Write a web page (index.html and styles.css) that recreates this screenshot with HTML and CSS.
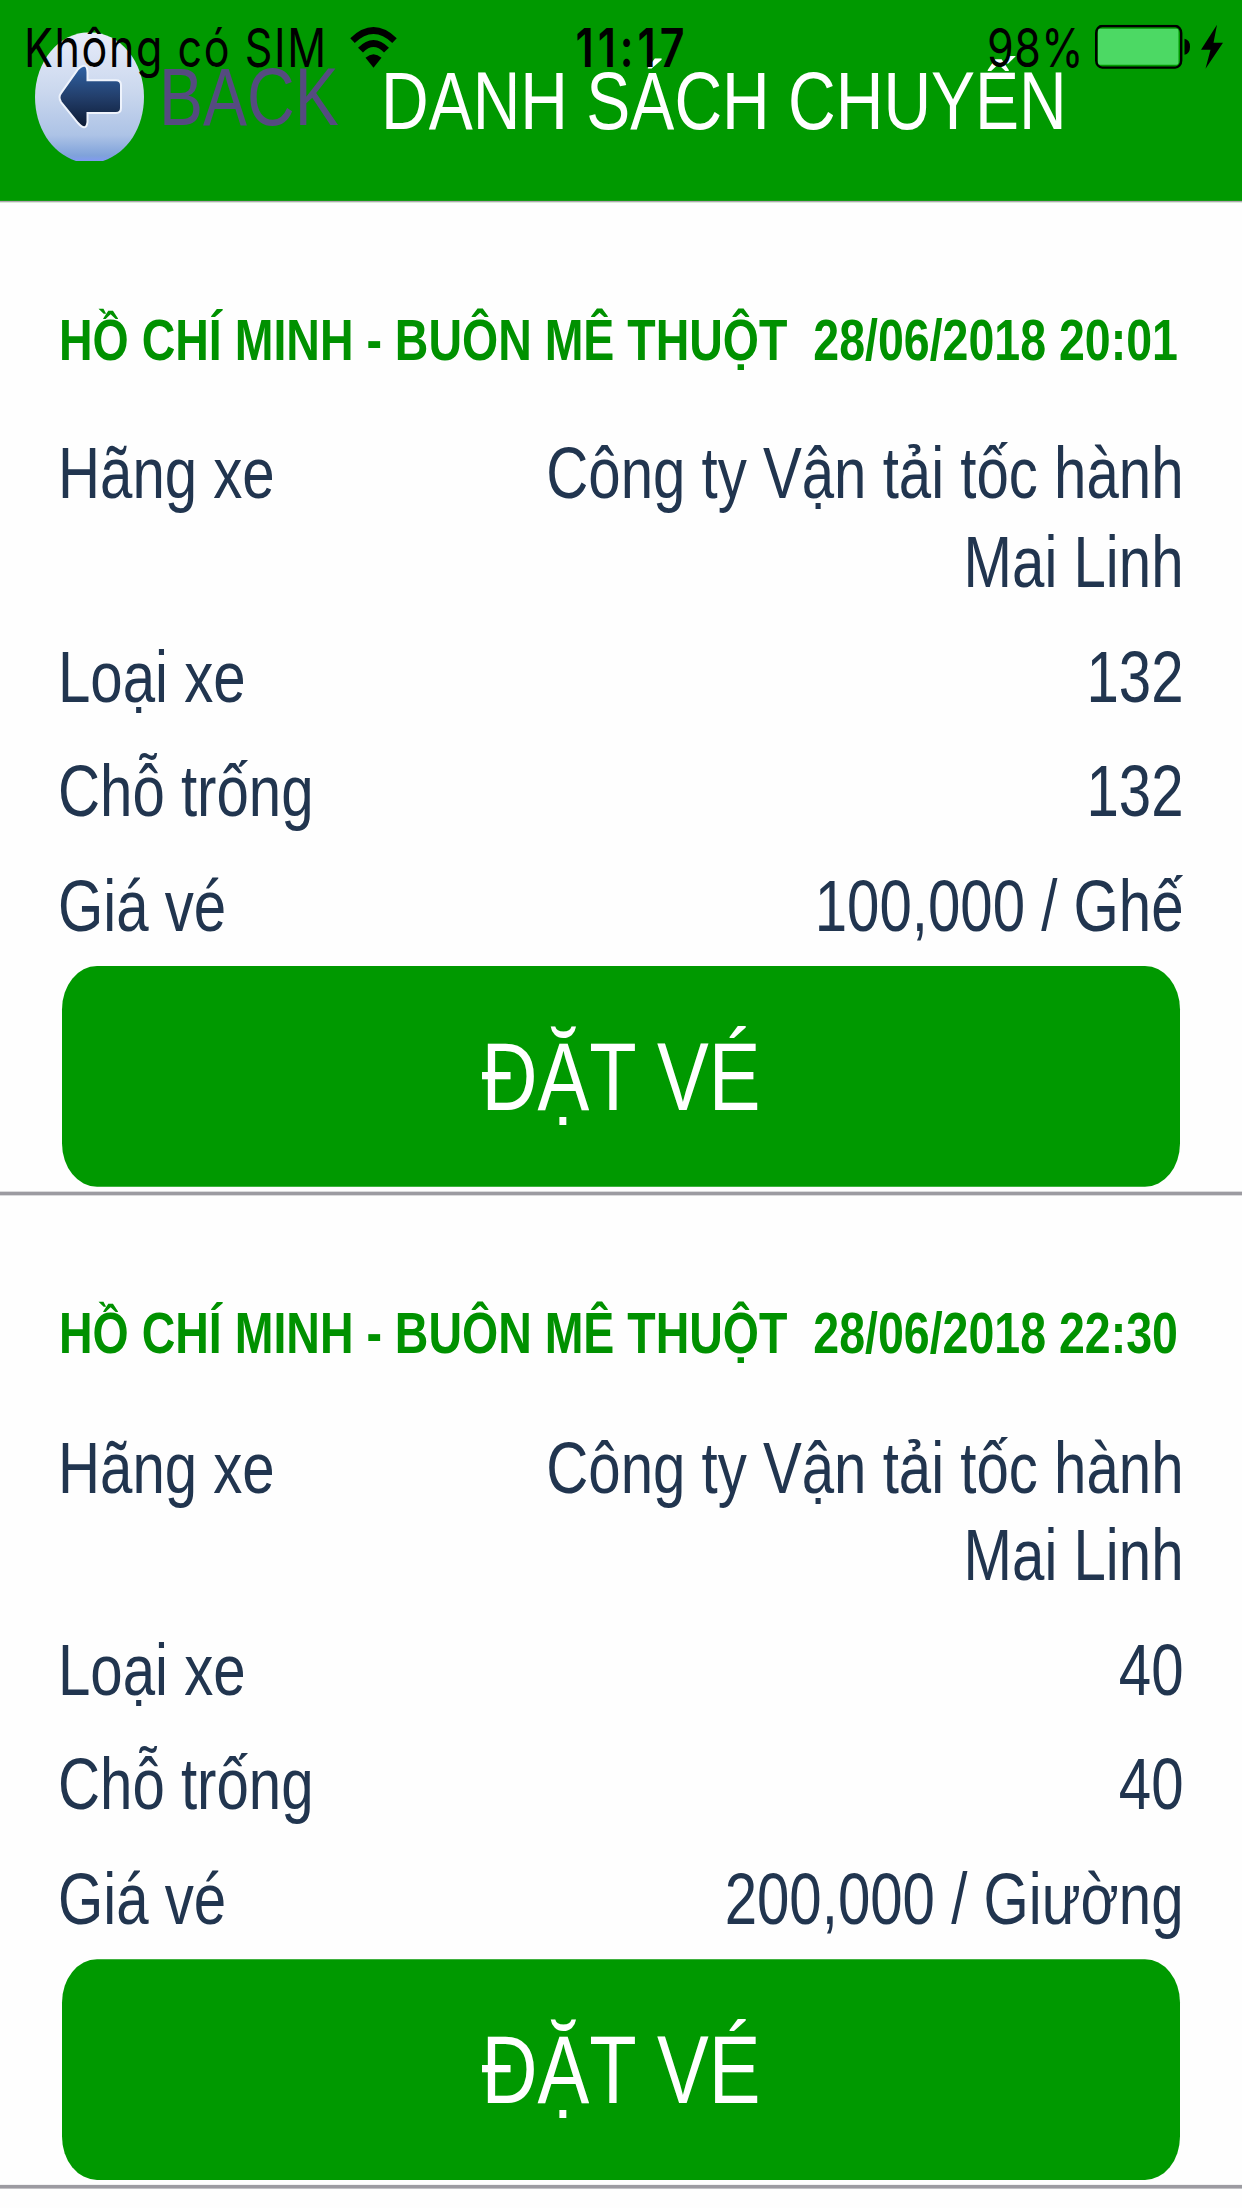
FILE: index.html
```html
<!DOCTYPE html>
<html lang="vi">
<head>
    <meta charset="UTF-8">
    <meta name="viewport" content="width=device-width, initial-scale=1.0">
    <title>Danh sách chuyến</title>
    <link rel="stylesheet" href="styles.css">
</head>
<body>
    <div class="screen">
        <div class="status-bar">
            <div class="status-left">
                <span class="carrier">Không có SIM</span>
                <svg class="wifi" viewBox="0 0 48 42" preserveAspectRatio="none">
                    <path d="M2.500 14.500 Q23.500 -5.500 44.500 14.500" fill="none" stroke="#000" stroke-width="6.500"/>
                    <path d="M10.500 24 Q23.500 11 36.500 24" fill="none" stroke="#000" stroke-width="7"/>
                    <path d="M15.500 31.500 Q23.500 24.500 31.500 31.500 L23.500 41.500 Z"/>
                </svg>
            </div>
            <span class="time">11:17</span>
            <div class="status-right">
                <span class="percent">98%</span>
                <svg class="battery" viewBox="0 0 95 44" preserveAspectRatio="none">
                    <rect x="1.200" y="1.200" width="85" height="41.600" rx="6" ry="7" fill="none" stroke="#000" stroke-width="2.400"/>
                    <rect x="3" y="4" width="80.500" height="36" rx="2" fill="#4cd964"/>
                    <path d="M89.500 14 Q95 15 95 22 Q95 29 89.500 30 Z"/>
                </svg>
                <svg class="bolt" viewBox="0 0 22 44" preserveAspectRatio="none">
                    <path d="M16 0 L0 25 H9.500 L4.500 44 L22 18 H12.500 Z"/>
                </svg>
            </div>
        </div>

        <header class="header">
            <a class="back">
                <svg class="back-icon" viewBox="0 0 109 130" preserveAspectRatio="none">
                    <defs>
                        <linearGradient id="ball" x1="0" y1="0" x2="0" y2="1">
                            <stop offset="0" stop-color="#e8ecfa"/>
                            <stop offset="0.45" stop-color="#cbd8ee"/>
                            <stop offset="0.8" stop-color="#adc3e6"/>
                            <stop offset="0.96" stop-color="#7fa2da"/>
                            <stop offset="1" stop-color="#8199f2"/>
                        </linearGradient>
                        <linearGradient id="arrow" x1="0" y1="0" x2="0" y2="1">
                            <stop offset="0" stop-color="#2f62a4"/>
                            <stop offset="0.5" stop-color="#233f6c"/>
                            <stop offset="1" stop-color="#0c1a33"/>
                        </linearGradient>
                    </defs>
                    <path d="M41 129 C16 121 0 95 0 65 C0 29 24 0 54.500 0 C85 0 109 29 109 65 C109 95 93 121 68 129 Z" fill="url(#ball)"/>
                    <path d="M26 61 L43 37 Q52 29 52.500 40 V48 H81 Q86 48 86 53 V76 Q86 81 81 81 H52.500 V90 Q51 100 43 91 L26 70 Q23 65 26 61 Z" fill="url(#arrow)" stroke="#eef3fc" stroke-width="2"/>
                </svg>
                <span class="back-text">BACK</span>
            </a>
            <h1>DANH SÁCH CHUYẾN</h1>
        </header>

        <div class="trip">
            <h2>HỒ CHÍ MINH - BUÔN MÊ THUỘT&nbsp; 28/06/2018 20:01</h2>
            <div class="row"><span>Hãng xe</span><span class="value">Công ty Vận tải tốc hành Mai Linh</span></div>
            <div class="row"><span>Loại xe</span><span class="value">132</span></div>
            <div class="row"><span>Chỗ trống</span><span class="value">132</span></div>
            <div class="row"><span>Giá vé</span><span class="value">100,000 / Ghế</span></div>
            <button>ĐẶT VÉ</button>
        </div>

        <div class="trip">
            <h2>HỒ CHÍ MINH - BUÔN MÊ THUỘT&nbsp; 28/06/2018 22:30</h2>
            <div class="row"><span>Hãng xe</span><span class="value">Công ty Vận tải tốc hành Mai Linh</span></div>
            <div class="row"><span>Loại xe</span><span class="value">40</span></div>
            <div class="row"><span>Chỗ trống</span><span class="value">40</span></div>
            <div class="row"><span>Giá vé</span><span class="value">200,000 / Giường</span></div>
            <button>ĐẶT VÉ</button>
        </div>
    </div>
</body>
</html>
```
FILE: styles.css
```css
* {
    box-sizing: border-box;
}
body {
    margin: 0;
    height: 2208px;
    overflow: hidden;
    background-color: #fefefe;
    font-family: "Liberation Sans", Arial, sans-serif;
    color: #21354f;
}
/* the whole view is stretched vertically to fill the tall screen */
.screen {
    position: relative;
    width: 1242px;
    height: 1780.6px;
    transform: scaleY(1.24);
    transform-origin: 0 0;
}
.status-bar {
    position: absolute;
    top: 0;
    left: 0;
    z-index: 1;
    width: 1242px;
    height: 76px;
    padding: 0 19px 0 24px;
    display: grid;
    grid-template-columns: 1fr auto 1fr;
    align-items: center;
    font-family: Inter, sans-serif;
    font-size: 43px;
    line-height: 76px;
    color: #000;
}
.status-left,
.status-right {
    display: flex;
    align-items: center;
}
.status-right {
    justify-content: flex-end;
}
.carrier {
    width: 326px;
    letter-spacing: 1.6px;
    white-space: nowrap;
}
.wifi {
    width: 48px;
    height: 34px;
}
.time {
    padding-left: 17px;
    font-weight: 600;
    letter-spacing: 4px;
}
.percent {
    margin-right: 11px;
    letter-spacing: 0.5px;
}
.battery {
    width: 95px;
    height: 35.5px;
}
.bolt {
    width: 22px;
    height: 35.5px;
    margin-left: 11px;
}
.header {
    display: flex;
    align-items: flex-start;
    height: 163px;
    padding: 26px 0 0 35px;
    background-color: #009900;
    border-bottom: 1px solid #b3a5b3;
}
.back {
    display: flex;
    width: 346px;
}
.back-icon {
    width: 109px;
    height: 104.6px;
}
.back-text {
    margin: 14.8px 0 0 15px;
    font-size: 66px;
    line-height: 74px;
    color: #554b80;
}
h1 {
    margin: 18px 0 0;
    font-size: 66px;
    line-height: 74px;
    font-weight: normal;
    white-space: nowrap;
    color: #fff;
}
.trip {
    display: flex;
    flex-direction: column;
    height: 801.2px;
    padding: 84px 58px 0;
    border-bottom: 3px solid #9c9ba1;
}
h2 {
    margin: 0 0 46.4px 1px;
    font-size: 46.5px;
    line-height: 54px;
    white-space: nowrap;
    color: #009100;
}
.row {
    display: flex;
    justify-content: space-between;
    margin-bottom: 22.3px;
    padding-right: 0.5px;
    font-size: 58.2px;
    line-height: 70.4px;
}
.value {
    max-width: 680px;
    text-align: right;
}
button {
    height: 178px;
    margin: -9.4px 4px 0;
    padding: 0;
    border: none;
    border-radius: 35px;
    background-color: #009900;
    color: #fff;
    font-family: inherit;
    font-size: 77.6px;
}
```
